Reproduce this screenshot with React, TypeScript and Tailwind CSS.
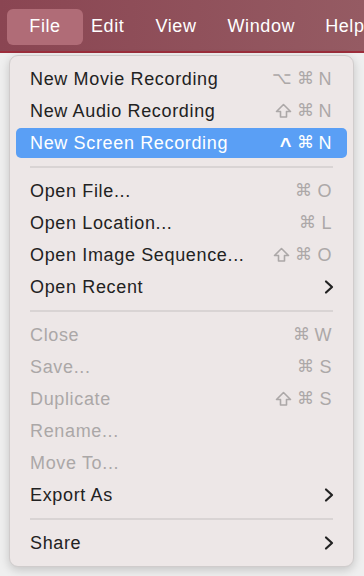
import React from "react";

type Item = {
  label: string;
  keys?: string[];
  disabled?: boolean;
  active?: boolean;
  submenu?: boolean;
};

const groups: Item[][] = [
  [
    { label: "New Movie Recording", keys: ["⌥", "⌘", "N"] },
    { label: "New Audio Recording", keys: ["⇧", "⌘", "N"] },
    { label: "New Screen Recording", keys: ["^", "⌘", "N"], active: true },
  ],
  [
    { label: "Open File...", keys: ["⌘", "O"] },
    { label: "Open Location...", keys: ["⌘", "L"] },
    { label: "Open Image Sequence...", keys: ["⇧", "⌘", "O"] },
    { label: "Open Recent", submenu: true },
  ],
  [
    { label: "Close", keys: ["⌘", "W"], disabled: true },
    { label: "Save...", keys: ["⌘", "S"], disabled: true },
    { label: "Duplicate", keys: ["⇧", "⌘", "S"], disabled: true },
    { label: "Rename...", disabled: true },
    { label: "Move To...", disabled: true },
    { label: "Export As", submenu: true },
  ],
  [{ label: "Share", submenu: true }],
];

function Chevron() {
  return (
    <svg width="10" height="16" viewBox="0 0 10 16" className="-mr-[2px]">
      <polyline
        points="2,2.5 8,8 2,13.5"
        fill="none"
        stroke="#222"
        strokeWidth="2.2"
        strokeLinecap="round"
        strokeLinejoin="round"
      />
    </svg>
  );
}

function Shift({ color }: { color: string }) {
  return (
    <svg width="17" height="16" viewBox="0 0 17 16">
      <path
        d="M8.5 1.5 L15.5 8.5 H11.5 V14 H5.5 V8.5 H1.5 Z"
        fill="none"
        stroke={color}
        strokeWidth="1.6"
        strokeLinejoin="round"
      />
    </svg>
  );
}

function Row({ item }: { item: Item }) {
  const textColor = item.active
    ? "text-white"
    : item.disabled
    ? "text-[#aba7a7]"
    : "text-[#222222]";
  const keyColor = item.active ? "text-white" : "text-[#aca8a8]";
  const keyHex = item.active ? "#ffffff" : "#aca8a8";
  return (
    <div className={`h-[32px] flex items-center ${item.active ? "py-[1px]" : ""}`}>
      <div
        className={`flex-1 h-full flex items-center justify-between pl-[14px] pr-[15px] rounded-[5px] ${
          item.active ? "bg-[#5a9ff5]" : ""
        }`}
      >
        <span className={`text-[18px] tracking-[0.65px] ${textColor}`}>{item.label}</span>
        {item.keys && (
          <span className={`flex items-center gap-[5px] text-[18px] ${keyColor}`}>
            {item.keys.map((k, i) =>
              k === "⇧" ? (
                <Shift key={i} color={keyHex} />
              ) : (
                <span
                  key={i}
                  className={
                    k === "⌘" || k === "⌥"
                      ? "text-[17px]"
                      : k === "^"
                      ? "text-[20px] font-bold leading-none pt-[4px]"
                      : "tracking-[0.5px]"
                  }
                >
                  {k}
                </span>
              )
            )}
          </span>
        )}
        {item.submenu && <Chevron />}
      </div>
    </div>
  );
}

export default function App() {
  return (
    <div
      className="w-[364px] h-[576px] overflow-hidden bg-[#efefef] flex flex-col"
      style={{ fontFamily: '"Liberation Sans", Arial, sans-serif' }}
    >
      <div className="h-[53px] shrink-0 bg-gradient-to-r from-[#8a4552] to-[#955b63] border-b-[2px] border-[#9c2e3c] flex items-center pl-[7px] pt-[2px] text-white text-[18px] tracking-[0.6px] whitespace-nowrap">
        <div className="h-[36px] w-[76px] shrink-0 rounded-[6px] bg-[#b06c77] flex items-center justify-center">
          File
        </div>
        <span className="ml-[8px]">Edit</span>
        <span className="ml-[31px]">View</span>
        <span className="ml-[31px]">Window</span>
        <span className="ml-[30px]">Help</span>
      </div>
      <div className="pl-[9px] pt-[2px]">
        <div className="w-[345px] rounded-[9px] bg-[#ede7e7] border border-[#d0cccc] shadow-[0_3px_10px_rgba(0,0,0,0.18)] px-[6px] py-[7px]">
          {groups.map((g, gi) => (
            <div key={gi}>
              {gi > 0 && (
                <div className="h-[16px] flex items-center px-[14px]">
                  <div className="h-[2px] w-full bg-[#d9d4d4]" />
                </div>
              )}
              {g.map((it, ii) => (
                <Row key={ii} item={it} />
              ))}
            </div>
          ))}
        </div>
      </div>
    </div>
  );
}
